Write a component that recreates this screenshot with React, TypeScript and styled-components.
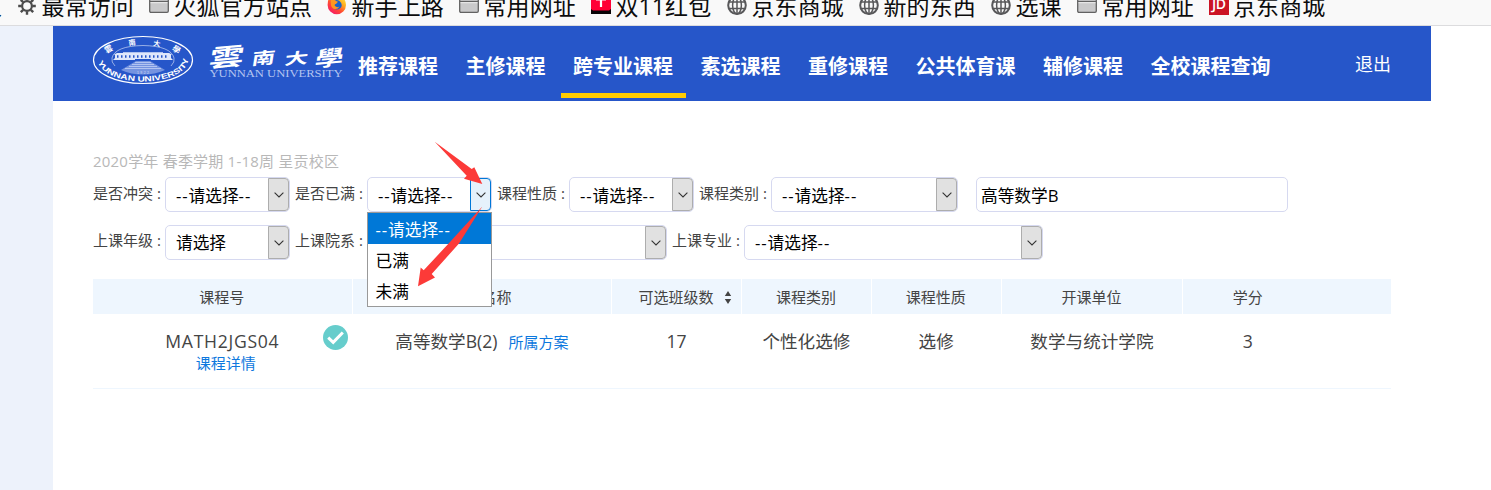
import React from 'react';
import styled, { createGlobalStyle } from 'styled-components';

const GlobalStyle = createGlobalStyle`
  * { box-sizing: border-box; }
  body {
    margin: 0;
    background: #fff;
    color: #444;
    font-family: 'Open Sans', 'Noto Sans CJK SC', sans-serif;
    overflow: hidden;
  }
`;

const Page = styled.div`
  height: 490px;
  display: flex;
  flex-direction: column;
  overflow: hidden;
`;

/* ---------- bookmarks ---------- */
const BookmarkBar = styled.div`
  height: 26px;
  flex: none;
  display: flex;
  align-items: flex-start;
  background: #f9f9f9;
  border-bottom: 1px solid #dcdcde;
  overflow: hidden;
  color: #0c0c0d;
  font-size: 23px;
`;
const Bookmark = styled.div<{ $w: number }>`
  width: ${p => p.$w}px;
  height: 34px;
  margin-top: -11px;
  flex: none;
  display: flex;
  align-items: center;
  gap: 4.5px;
  line-height: 34px;
  letter-spacing: 0.1px;
  white-space: nowrap;
  svg { flex: none; }
`;
const CutBookmark = styled(Bookmark)`
  justify-content: flex-end;
  margin-right: 15px;
  overflow: hidden;
`;

const Gear = () => (
  <svg width="20" height="20" viewBox="0 0 20 20" fill="none" stroke="#4c4c4c">
    <circle cx="10" cy="10" r="4.9" strokeWidth="2.2" />
    <path strokeWidth="2.4" d="M10 1.2v3.400M10 15.400v3.400M1.200 10h3.400M15.400 10h3.400M3.800 3.800l2.400 2.400M13.800 13.800l2.400 2.400M3.800 16.200l2.400-2.400M13.800 6.200l2.400-2.400" />
  </svg>
);
const Folder = () => (
  <svg width="20" height="20" viewBox="0 0 20 20">
    <path d="M.7 2.500q0-1.500 1.500-1.500h6l1.500 2h8.100q1.500 0 1.500 1.500v10.500q0 1.300-1.300 1.300H2q-1.300 0-1.300-1.300z" fill="#c9c9ca" stroke="#626262" strokeWidth="1.300" />
    <path d="M1 5.500h18" stroke="#626262" strokeWidth="1.200" />
    <path d="M1.500 6.700h17" stroke="#efefef" />
  </svg>
);
const Globe = () => (
  <svg width="20" height="20" viewBox="0 0 20 20" fill="none" stroke="#58585a" strokeWidth="1.500">
    <circle cx="10" cy="9.200" r="8.800" strokeWidth="2" />
    <ellipse cx="10" cy="9.200" rx="4.400" ry="8.800" />
    <path d="M10 .4v17.600M2 6h16M2 12.600h16" />
  </svg>
);
const Firefox = () => (
  <svg width="20" height="20" viewBox="0 0 20 20">
    <defs>
      <linearGradient id="fox" x1="1" y1="0" x2="0.200" y2="1">
        <stop offset="0" stopColor="#fff04a" />
        <stop offset=".35" stopColor="#ffb01f" />
        <stop offset=".65" stopColor="#ff4b32" />
        <stop offset="1" stopColor="#f5156c" />
      </linearGradient>
    </defs>
    <path d="M1 5q1-3 2-4l1 2q5-4 11-2 4 3 4 8a9.200 9.200 0 0 1-18.400 0z" fill="url(#fox)" />
    <path d="M5.500 6.500q3-4 7-1.500 3.500 3 1.500 6.500-3 3.500-7 1-2.500-2-1.500-6" fill="#1b62c9" />
    <path d="M4 4q3-1 5 1l2 .8-2 2.200q-2 0-1 2 2 2 4.500.5-2 3.500-6 2.200Q3 11 4 4" fill="#ff9720" />
  </svg>
);
const RedEnvelope = () => (
  <svg width="20" height="20" viewBox="0 0 20 20">
    <path d="M0 0h20v18H0z" fill="#080406" />
    <path d="M0 0h20v13l-2 1.500H2L0 13z" fill="#ff0036" />
    <path d="M5 3.500h10M10 4v7" stroke="#fff" strokeWidth="2.200" />
  </svg>
);
const JdLabel = styled.span`
  width: 19.5px;
  height: 20px;
  flex: none;
  margin-top: -2px;
  background: #cb1424;
  color: #fff;
  font: 600 14px/17px 'Open Sans', sans-serif;
  letter-spacing: -0.5px;
  text-align: center;
`;

const bookmarks: { icon: React.ReactNode; text: string; w: number }[] = [
  { icon: <Gear />, text: '最常访问', w: 132 },
  { icon: <Folder />, text: '火狐官方站点', w: 178 },
  { icon: <Firefox />, text: '新手上路', w: 132 },
  { icon: <Folder />, text: '常用网址', w: 132 },
  { icon: <RedEnvelope />, text: '双11红包', w: 136 },
  { icon: <Globe />, text: '京东商城', w: 132 },
  { icon: <Globe />, text: '新的东西', w: 132 },
  { icon: <Globe />, text: '选课', w: 86 },
  { icon: <Folder />, text: '常用网址', w: 132 },
  { icon: <JdLabel>JD</JdLabel>, text: '京东商城', w: 132 },
];

/* ---------- page frame ---------- */
const Body = styled.div`
  flex: 1;
  display: flex;
  min-height: 0;
`;
const Gutter = styled.div`
  width: 53px;
  background: #edf2fb;
`;
const Main = styled.main`
  width: 1378px;
  position: relative;
`;
const Header = styled.header`
  height: 75px;
  display: flex;
  background: #2656c9;
  color: #fff;
`;
const Brand = styled.div`
  width: 292.6px;
  flex: none;
  svg { display: block; }
`;
const Nav = styled.nav`
  display: flex;
  gap: 2.5px;
`;
const NavItem = styled.a<{ $active?: boolean }>`
  height: 72px;
  padding: 0 12.5px;
  font-size: 20px;
  font-weight: bold;
  line-height: 82px;
  white-space: nowrap;
  border-bottom: 5px solid ${p => (p.$active ? '#fc0' : 'transparent')};
`;
const Logout = styled.a`
  margin: 0 40px 0 auto;
  font-size: 18px;
  line-height: 76px;
`;

const Logo = () => (
  <svg width="292" height="75" viewBox="53 26 292 75" fill="none" stroke="#fff">
    <defs>
      <path id="sealLower" d="M98 60a45 21.500 0 0 0 90 0" />
    </defs>
    <ellipse cx="143" cy="60" rx="49.500" ry="23.500" strokeWidth="1.200" />
    <path d="M115 66Q111 62 112 58Q115 46 143 45.500Q171 46 174 58Q175 62 171 66" strokeWidth=".7" opacity=".75" />
    <path d="M113 60h22v-1h16v1h22l-2-2v-3l1-.5-3-1.500h-6v-.8h-40v.8h-6l-3 1.500 1 .5v3z" fill="#dfe7fb" stroke="none" />
    <path d="M117 56.500h52" stroke="#2656c9" strokeWidth="2.600" strokeDasharray="1.500 2.500" />
    <path d="M136 61h14l15 9q-10 4.500-22 4.500T121 70z" fill="#a9bdf0" fillOpacity=".6" stroke="none" />
    <path d="M135 62.500h16M132 64.500h22M129 66.500h28M125 68.500h36" stroke="#dce5fc" strokeWidth=".6" />
    <g fill="#fff" stroke="none" fontFamily="'Noto Sans CJK TC', sans-serif" fontWeight="bold" fontSize="8" textAnchor="middle">
      <text transform="translate(110 51.500) rotate(-30)">雲</text>
      <text transform="translate(132.500 45) rotate(-8)" fontSize="7">南</text>
      <text transform="translate(156.500 46) rotate(10)" fontSize="7">大</text>
      <text transform="translate(175 52) rotate(30)">學</text>
    </g>
    <text fill="#fff" stroke="none" fontFamily="'Liberation Sans', sans-serif" fontWeight="bold" fontSize="7.500">
      <textPath href="#sealLower" startOffset="2" textLength="107" lengthAdjust="spacingAndGlyphs">YUNNAN UNIVERSITY</textPath>
    </text>
    <text x="137" y="74" fill="#cfdbf8" stroke="none" fontFamily="'Liberation Sans', sans-serif" fontSize="3.500" textLength="12">1922</text>
    <g fill="#fff" stroke="none" fontFamily="'Noto Sans CJK TC', sans-serif" fontWeight="bold">
      <text transform="translate(208 67.500) rotate(-5) skewX(-14) scale(1.450 1)" fontSize="24">雲</text>
      <text transform="translate(251 65) rotate(-5) skewX(-14) scale(1.300 .9)" fontSize="18">南</text>
      <text transform="translate(284 65) rotate(-5) skewX(-14) scale(1.300 .85)" fontSize="18">大</text>
      <text transform="translate(314 67) rotate(-5) skewX(-14) scale(1.300 .95)" fontSize="22">學</text>
    </g>
    <text x="209.500" y="77" fill="#b4c5f0" stroke="none" fontFamily="'Liberation Serif', serif" fontSize="9.500" textLength="133" lengthAdjust="spacingAndGlyphs">YUNNAN UNIVERSITY</text>
  </svg>
);

/* ---------- filters ---------- */
const Content = styled.section`
  padding: 49px 40px 0;
`;
const Term = styled.div`
  height: 27px;
  font-size: 15px;
  line-height: 23px;
  letter-spacing: 0.21px;
  color: #b8b8b8;
`;
const FilterRow = styled.div`
  height: 35px;
  margin-bottom: 13px;
  display: flex;
`;
const Label = styled.label<{ $up: number }>`
  width: 72px;
  flex: none;
  font-size: 15px;
  line-height: ${p => 32 - p.$up}px;
  color: #444;
  white-space: nowrap;
  span { margin-left: 4px; }
`;
const SelectBox = styled.div<{ $w: number }>`
  position: relative;
  width: ${p => p.$w}px;
  height: 35px;
  flex: none;
  margin-right: 5px;
  display: flex;
  justify-content: space-between;
  border: 1px solid #d6d9f0;
  border-radius: 5px;
  background: #fff;
  color: #000;
`;
const SelectText = styled.span<{ $drop: number }>`
  padding: ${p => p.$drop}px 0 0 10px;
  font-size: 16.7px;
  line-height: 33px;
  height: 33px;
  white-space: nowrap;
`;
const Dashes = styled.span`
  letter-spacing: 0.9px;
`;
const ArrowButton = styled.span<{ $open?: boolean }>`
  width: 21px;
  display: flex;
  align-items: center;
  justify-content: center;
  background: ${p => (p.$open ? '#e5f1fb' : '#e1e1e1')};
  border: 1px solid ${p => (p.$open ? '#0078d7' : '#adadad')};
  border-radius: 0 4px 4px 0;
`;
const Menu = styled.ul`
  position: absolute;
  z-index: 2;
  left: -1px;
  top: 34px;
  width: 125px;
  height: 95px;
  margin: 0;
  padding: 0;
  list-style: none;
  background: #fff;
  border: 1px solid #999;
`;
const Option = styled.li<{ $selected?: boolean }>`
  height: 31px;
  padding: 0 0 0 7.5px;
  font-size: 16.7px;
  line-height: 34px;
  color: ${p => (p.$selected ? '#fff' : '#000')};
  background: ${p => (p.$selected ? '#0078d7' : '#fff')};
`;
const SearchInput = styled.input`
  width: 312px;
  height: 35px;
  margin-left: 13px;
  padding: 1px 4px 0;
  border: 1px solid #d6d9f0;
  border-radius: 5px;
  outline: none;
  font: 16.7px 'Open Sans', 'Noto Sans CJK SC', sans-serif;
  color: #000;
`;

const Placeholder = () => <><Dashes>--</Dashes>请选择<Dashes>--</Dashes></>;

type SelectProps = { label: string; w: number; value?: React.ReactNode; drop?: number; options?: React.ReactNode[] };
const Select = ({ label, w, value = <Placeholder />, drop = 0, options }: SelectProps) => (
  <>
    <Label $up={drop ? 0 : 2}>{label}<span>:</span></Label>
    <SelectBox $w={w}>
      <SelectText $drop={drop}>{value}</SelectText>
      <ArrowButton $open={!!options}>
        <svg width="10" height="6" viewBox="0 0 10 6" fill="none" stroke="#333" strokeWidth="1.100">
          <path d="M.6 .7L5 5 9.400.7" />
        </svg>
      </ArrowButton>
      {options && (
        <Menu>
          {options.map((o, i) => <Option key={i} $selected={i === 0}>{o}</Option>)}
        </Menu>
      )}
    </SelectBox>
  </>
);

/* ---------- table ---------- */
const columns = '20fr 20fr 10fr 10fr 10fr 14fr 10fr 6fr';
const TableHead = styled.div`
  height: 35px;
  margin-top: 19px;
  display: grid;
  grid-template-columns: ${columns};
  background: #eef6fe;
`;
const HeadCell = styled.div<{ $last?: boolean; $sortable?: boolean }>`
  display: flex;
  align-items: center;
  justify-content: center;
  gap: 10px;
  padding: 0 1px 1px ${p => (p.$sortable ? 18 : 0)}px;
  font-size: 15px;
  white-space: nowrap;
  border-right: ${p => (p.$last ? 0 : 1)}px solid #fff;
  svg { margin-top: 1px; }
`;
const Row = styled.div`
  height: 75px;
  display: grid;
  grid-template-columns: ${columns};
  border-bottom: 1px solid #eef6fe;
`;
const Cell = styled.div`
  position: relative;
  padding: 13px 1px 0 0;
  text-align: center;
  font-size: 17.6px;
  line-height: 28px;
  white-space: nowrap;
`;
const CourseCode = styled.span`
  letter-spacing: 0.7px;
`;
const Link = styled.a`
  color: #0d78de;
  font-size: 15px;
`;
const DetailLink = styled(Link)`
  display: block;
  padding-left: 7px;
  line-height: 17px;
`;
const PlanLink = styled(Link)`
  margin-left: 11px;
`;
const Check = styled.svg`
  position: absolute;
  right: 5px;
  top: 11px;
`;
const Annotation = styled.svg`
  position: absolute;
  z-index: 3;
  left: 360px;
  top: 110px;
  pointer-events: none;
`;

export default function App() {
  return (
    <Page>
      <GlobalStyle />
      <BookmarkBar>
        <CutBookmark $w={2}>人</CutBookmark>
        {bookmarks.map((b, i) => (
          <Bookmark key={i} $w={b.w}>{b.icon}{b.text}</Bookmark>
        ))}
      </BookmarkBar>
      <Body>
        <Gutter />
        <Main>
          <Header>
            <Brand><Logo /></Brand>
            <Nav>
              {['推荐课程', '主修课程', '跨专业课程', '素选课程', '重修课程', '公共体育课', '辅修课程', '全校课程查询'].map(t => (
                <NavItem key={t} $active={t === '跨专业课程'}>{t}</NavItem>
              ))}
            </Nav>
            <Logout>退出</Logout>
          </Header>
          <Content>
            <Term>2020学年 春季学期 1-18周 呈贡校区</Term>
            <FilterRow>
              <Select label="是否冲突" w={125} drop={1} />
              <Select label="是否已满" w={125} drop={1} options={[<Placeholder />, '已满', '未满']} />
              <Select label="课程性质" w={125} drop={1} />
              <Select label="课程类别" w={187} drop={1} />
              <SearchInput defaultValue="高等数学B" />
            </FilterRow>
            <FilterRow>
              <Select label="上课年级" w={125} value="请选择" />
              <Select label="上课院系" w={300} value="" />
              <Select label="上课专业" w={299} />
            </FilterRow>
            <TableHead>
              <HeadCell>课程号</HeadCell>
              <HeadCell>课程名称</HeadCell>
              <HeadCell $sortable>
                可选班级数
                <svg width="8" height="14" viewBox="0 0 8 14" fill="#444">
                  <path d="M4 1L7.200 6H.8zM4 14L.8 9h6.400z" />
                </svg>
              </HeadCell>
              <HeadCell>课程类别</HeadCell>
              <HeadCell>课程性质</HeadCell>
              <HeadCell>开课单位</HeadCell>
              <HeadCell $last>学分</HeadCell>
            </TableHead>
            <Row>
              <Cell>
                <CourseCode>MATH2JGS04</CourseCode>
                <DetailLink>课程详情</DetailLink>
                <Check width="25" height="25" viewBox="0 0 25 25">
                  <circle cx="12.500" cy="12.500" r="12.500" fill="#66cdcc" />
                  <path d="M5.200 12.700l5 4.600 9.600-9.800" fill="none" stroke="#fff" strokeWidth="3" />
                </Check>
              </Cell>
              <Cell>高等数学B(2)<PlanLink>所属方案</PlanLink></Cell>
              <Cell>17</Cell>
              <Cell>个性化选修</Cell>
              <Cell>选修</Cell>
              <Cell>数学与统计学院</Cell>
              <Cell>3</Cell>
            </Row>
          </Content>
          <Annotation width="90" height="160" viewBox="413 136 90 160" fill="#fc3a38">
            <path d="M434.700 141.700L471.700 169l2.600-1.700 8 16.700-18.300-5.300 2.700-3z" />
            <path d="M482.300 206.500L459 243.500 431.700 274l3.300 3.500-17 8.700 2.700-18.700 3 2.800L450 242z" />
          </Annotation>
        </Main>
      </Body>
    </Page>
  );
}
